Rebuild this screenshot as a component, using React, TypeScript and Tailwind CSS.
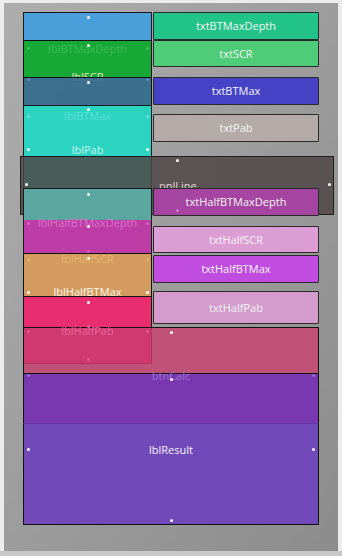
const font = "text-[11px] leading-[14px] font-['Open_Sans',sans-serif] whitespace-nowrap";
const field = `flex items-center justify-center border border-[#2a2a2a] rounded-[1px] text-[#f4f4f4] ${font}`;
const dot = "w-[3px] h-[3px] rounded-full";
const pair = "absolute left-[23px] w-[122px] flex justify-between";

export default function App() {
  return (
    <div className="w-[342px] h-[556px] bg-[#ececec] flex flex-col">
      {/* designer canvas */}
      <div className="relative ml-[4px] mt-[3px] w-[334px] h-[548px] pl-[19px] pt-[9px] bg-linear-to-br from-[#adadad] to-[#8c8c8c]">
        {/* pnlLine sits over the top half of the form */}
        <div className="absolute left-[16px] top-[153px] w-[314px] h-[59px] bg-[rgba(78,67,69,0.83)] border border-[#202020]" />
        <div className={`absolute left-[155px] top-[176px] text-[#e0d8d8] ${font}`}>pnlLine</div>

        <div className="flex flex-col w-[296px]">
          <div className="flex items-start gap-[1px]">
            {/* labels */}
            <div className={`flex flex-col w-[129px] text-center ${font}`}>
              <div className="h-[28px] bg-[#4a9fdb] border-t border-x border-[#1a1a1a]" />
              <div className="h-[37px] flex flex-col bg-[#17a935] border-t border-x border-[#111]">
                <span className="mt-[1px] text-[#3fbb55]">lblBTMaxDepth</span>
                <span className="mt-[14px] text-[#ece6b8]">lblSCR</span>
              </div>
              <div className="relative h-[28px] bg-[rgba(31,98,136,0.8)] border-t border-x border-[#111]" />
              <div className="h-[83px] flex flex-col bg-[#2bd4c0] border-t border-x border-[#1a1a1a]">
                <span className="mt-[3px] text-[#5fe0d0]">lblBTMax</span>
                <span className="mt-[20px] text-[#c8f6ef]">lblPab</span>
              </div>
              <div className="relative h-[32px] bg-[#5aa7a1] border-t border-x border-[#1a1a1a]" />
              <div className="relative h-[33px] flex flex-col bg-[#be3ca6] border-x border-[#1a1a1a]">
                <span className="-mt-[4px] text-[#d872c8]">lblHalfBTMaxDepth</span>
              </div>
              <div className="relative h-[43px] flex flex-col bg-[#d49b5e] border-t border-x border-[#111]">
                <span className="-mt-[2px] text-[#e6b86c]">lblHalfSCR</span>
                <span className="mt-[19px] text-[#fbf6ee]">lblHalfBTMax</span>
              </div>
              <div className="relative h-[31px] bg-[#e92e6f] border-t border-x border-[#111]" />
            </div>

            {/* text boxes */}
            <div className="flex flex-col w-[166px]">
              <div className={`${field} h-[28px] bg-[#22c389]`}>txtBTMaxDepth</div>
              <div className={`${field} h-[27px] bg-[#4ecc78]`}>txtSCR</div>
              <div className={`${field} h-[28px] mt-[10px] bg-[#4542c5]`}>txtBTMax</div>
              <div className={`${field} h-[28px] mt-[9px] bg-[#b4aba9]`}>txtPab</div>
              <div className={`${field} relative h-[28px] mt-[46px] bg-[#a545a1]`}>txtHalfBTMaxDepth</div>
              <div className={`${field} h-[27px] mt-[10px] bg-[#dc9dd5]`}>txtHalfSCR</div>
              <div className={`${field} h-[28px] mt-[2px] bg-[#c04de0]`}>txtHalfBTMax</div>
              <div className={`${field} h-[33px] mt-[8px] bg-[#d39ccd]`}>txtHalfPab</div>
            </div>
          </div>

          {/* wide controls */}
          <div className="relative h-[46px] flex items-start bg-[#bf5276] border-t border-x border-[#111]">
            <div className={`w-[128px] h-[36px] flex justify-center bg-[#d0396f] border-r border-b border-[#b2325f] text-[#e8689a] ${font}`}>
              <span className="-mt-[4px]">lblHalfPab</span>
            </div>
          </div>
          <div className={`relative h-[50px] flex justify-center bg-[#7a38b0] border-t border-x border-[#111] text-[#9c72d4] ${font}`}>
            <span className="-mt-[5px]">btnCalc</span>
          </div>
          <div className={`relative h-[102px] flex justify-center pt-[19px] bg-[#7249b8] border-t border-t-[#6535a6] border-x border-b border-x-[#111] border-b-[#111] text-[#f6f2ff] ${font}`}>
            <span>lblResult</span>
          </div>
        </div>

        {/* selection handles */}
        <div className={`absolute left-[83px] top-[13px] bg-white ${dot}`} />
        <div className={`absolute left-[83px] top-[41px] bg-white ${dot}`} />
        <div className={`${pair} top-[44px]`}><span className={`bg-[#45c060] ${dot}`} /><span className={`bg-[#45c060] ${dot}`} /></div>
        <div className={`${pair} top-[75px]`}><span className={`bg-[#6a86b8] ${dot}`} /><span className={`bg-[#6a86b8] ${dot}`} /></div>
        <div className={`absolute left-[83px] top-[78px] bg-white ${dot}`} />
        <div className={`absolute left-[83px] top-[105px] bg-white ${dot}`} />
        <div className={`${pair} top-[112px]`}><span className={`bg-[#6ce4d6] ${dot}`} /><span className={`bg-[#6ce4d6] ${dot}`} /></div>
        <div className={`${pair} top-[145px]`}><span className={`bg-white ${dot}`} /><span className={`bg-white ${dot}`} /></div>
        <div className={`absolute left-[172px] top-[156px] bg-white ${dot}`} />
        <div className={`absolute left-[21px] top-[180px] bg-white ${dot}`} />
        <div className={`absolute left-[324px] top-[180px] bg-white ${dot}`} />
        <div className={`absolute left-[172px] top-[206px] bg-[#c880c4] ${dot}`} />
        <div className={`absolute left-[83px] top-[190px] bg-white ${dot}`} />
        <div className={`${pair} top-[219px]`}><span className={`bg-[#d864c0] ${dot}`} /><span className={`bg-[#d864c0] ${dot}`} /></div>
        <div className={`absolute left-[83px] top-[222px] bg-white ${dot}`} />
        <div className={`absolute left-[83px] top-[247px] bg-[#d860bc] ${dot}`} />
        <div className={`absolute left-[83px] top-[254px] bg-white ${dot}`} />
        <div className={`${pair} top-[255px]`}><span className={`bg-[#e6b070] ${dot}`} /><span className={`bg-[#e6b070] ${dot}`} /></div>
        <div className={`${pair} top-[288px]`}><span className={`bg-white ${dot}`} /><span className={`bg-white ${dot}`} /></div>
        <div className={`absolute left-[83px] top-[298px] bg-white ${dot}`} />
        <div className={`absolute left-[83px] top-[322px] bg-[#f06090] ${dot}`} />
        <div className={`${pair} top-[327px]`}><span className={`bg-[#e0608c] ${dot}`} /><span className={`bg-[#e0608c] ${dot}`} /></div>
        <div className={`absolute left-[166px] top-[328px] bg-white ${dot}`} />
        <div className={`absolute left-[83px] top-[355px] bg-[#e0608c] ${dot}`} />
        <div className="absolute left-[23px] top-[371px] w-[288px] flex justify-between"><span className={`bg-[#9a6ad0] ${dot}`} /><span className={`bg-[#9a6ad0] ${dot}`} /></div>
        <div className={`absolute left-[166px] top-[375px] bg-white ${dot}`} />
        <div className="absolute left-[23px] top-[445px] w-[288px] flex justify-between"><span className={`bg-white ${dot}`} /><span className={`bg-white ${dot}`} /></div>
        <div className={`absolute left-[166px] top-[516px] bg-white ${dot}`} />
      </div>
      <div className="mt-auto h-[5px] bg-[#c8c8c8]" />
    </div>
  );
}
